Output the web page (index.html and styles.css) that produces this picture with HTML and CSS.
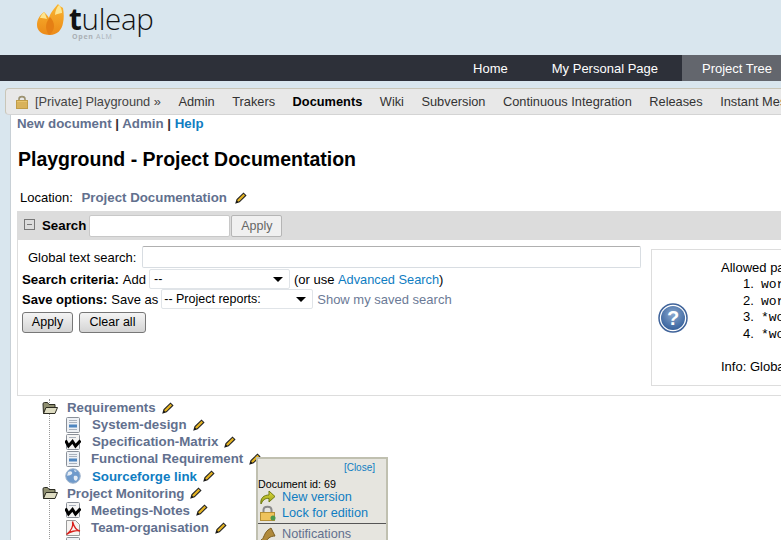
FILE: index.html
```html
<!DOCTYPE html>
<html lang="en">
<head>
    <meta charset="UTF-8">
    <title>Playground - Project Documentation</title>
    <link rel="stylesheet" href="styles.css">
</head>
<body>
    <svg class="sprites" width="0" height="0">
        <defs>
            <linearGradient id="flameFill" x1="0" y1="0" x2="0" y2="1">
                <stop offset="0" stop-color="#f9b530"/>
                <stop offset="1" stop-color="#ec8a18"/>
            </linearGradient>
            <radialGradient id="helpFill" cx=".5" cy=".35" r=".7">
                <stop offset="0" stop-color="#8aa8cf"/>
                <stop offset="1" stop-color="#2f5b98"/>
            </radialGradient>
            <linearGradient id="arrowFill" x1="0" y1="0" x2="0" y2="1">
                <stop offset="0" stop-color="#e2dc3a"/>
                <stop offset="1" stop-color="#8f9a18"/>
            </linearGradient>
        </defs>
        <symbol id="pencil" viewBox="0 0 12 12">
            <path d="M1 11 L2 7.500 L8.500 1.200 L10.800 3.400 L4.400 9.800 Z" fill="#e6b422" stroke="#222" stroke-width="1.100"/>
            <path d="M1 11 L2 8.600 L3.400 10 Z" fill="#111"/>
        </symbol>
        <symbol id="folder" viewBox="0 0 16 14">
            <path d="M1 3 Q1 1.500 2.500 1.500 L5.500 1.500 L7 3.500 L13 3.500 L13 7 L4 7 L1.500 12.500 Z" fill="#8f8f70" stroke="#2c2c22"/>
            <path d="M1.500 12.500 L4 6.500 L15.500 6.500 L13 12.500 Z" fill="#dedcc2" stroke="#2c2c22" stroke-linejoin="round"/>
        </symbol>
        <symbol id="doc" viewBox="0 0 16 16">
            <rect x="1.500" y=".5" width="13" height="15" rx="1" fill="#eef1f5" stroke="#8a9099"/>
            <path d="M4 3.500 H12 M4 5.500 H12" stroke="#aab2bd"/>
            <rect x="4" y="7.500" width="8" height="3" fill="#4f86c0"/>
            <path d="M4 12.500 H12" stroke="#aab2bd"/>
        </symbol>
        <symbol id="word" viewBox="0 0 16 16">
            <rect x="1.500" y=".5" width="13" height="15" rx="1" fill="#f4f4f4" stroke="#8a9099"/>
            <path d="M4 3.500 H11" stroke="#aab2bd"/>
            <path d="M.5 6.500 L3.500 12 L7.500 7.500 L10.500 12 L15.500 6.500" fill="none" stroke="#000" stroke-width="3"/>
        </symbol>
        <symbol id="pdf" viewBox="0 0 16 16">
            <path d="M1.500 .5 H10.500 L14.500 4.500 V15.500 H1.500 Z" fill="#f6f4f2" stroke="#9a9a9a"/>
            <path d="M7.500 1.500 C8.500 6 6 11 1.500 14.500 C5 11.500 11 10 15 11 C11.500 10.500 9 7 7.500 1.500 Z" fill="none" stroke="#d8201c" stroke-width="1.300"/>
        </symbol>
        <symbol id="globe" viewBox="0 0 16 16">
            <circle cx="8" cy="8" r="7.300" fill="#6f9acb" stroke="#a4b7cd"/>
            <path d="M3 4 C6 2 8 4 7 6 C5 8 3 7 2 8 Z M9 8 C12 7 14 9 12 12 C10 14 8 11 9 8 Z M9 2 L12 3 L10 4 Z" fill="#e6edf5"/>
        </symbol>
    </svg>

    <header class="masthead">
        <svg class="flame" width="28" height="32" viewBox="0 0 28 32">
            <path d="M1 21 C1 16 3 12 8 8 C10 10 12 12 13 14 C14 9 18 5 22 0 C23 2 26 3 27 4 C28 10 28 14 27 19 C26 26 21 31 14 31 C6 31 1 27 1 21 Z" fill="url(#flameFill)"/>
            <path d="M13 31 C8 24 10 18 14 13 C19 18 20 26 13 31 Z" fill="#e57f14"/>
            <path d="M4 14 C5 11 7 9 8 8 C10 11 10 13 11 15 C8 14 6 14 4 14 Z" fill="#fde58f"/>
            <path d="M19 11 C19 7 21 3 23 1 C25 3 26 6 26 9 C24 9 21 10 19 11 Z" fill="#fde58f"/>
        </svg>
        <div class="brand">
            <div class="brand-name"><b>t</b>uleap</div>
            <div class="brand-sub"><b>Open</b> ALM</div>
        </div>
    </header>

    <nav class="topnav">
        <a href="#">Home</a>
        <a href="#">My Personal Page</a>
        <a href="#" class="active">Project Tree</a>
    </nav>

    <div class="servicebar">
        <svg class="lock" width="12" height="14" viewBox="0 0 12 14">
            <path d="M3 6 V4 C3 .8 9 .8 9 4 V6" fill="none" stroke="#9b9170" stroke-width="1.600"/>
            <rect x=".5" y="5.500" width="11" height="8" fill="#e8c46c" stroke="#c09c48"/>
            <path d="M1 8 H11 M1 10 H11 M1 12 H11" stroke="#c9a04a"/>
        </svg>
        <span class="project-name">[Private] Playground »</span>
        <a href="#">Admin</a>
        <a href="#">Trakers</a>
        <a href="#" class="current">Documents</a>
        <a href="#">Wiki</a>
        <a href="#">Subversion</a>
        <a href="#">Continuous Integration</a>
        <a href="#">Releases</a>
        <a href="#">Instant Messaging</a>
    </div>

    <main class="content">
        <p class="toolbar">
            <a href="#">New document</a> | <a href="#">Admin</a> | <a href="#" class="help">Help</a>
        </p>
        <h2>Playground - Project Documentation</h2>
        <p class="location">
            Location: <a href="#">Project Documentation</a>
            <svg class="pencil" width="12" height="12"><use href="#pencil"/></svg>
        </p>

        <section class="search">
            <div class="search-head">
                <span class="toggle"></span>
                <b>Search</b>
                <input type="text" class="quick-input">
                <button class="btn-light">Apply</button>
            </div>
            <div class="search-body">
                <div class="search-form">
                    <div class="row global">
                        <label>Global text search:</label>
                        <input type="text" class="global-input">
                    </div>
                    <div class="row">
                        <b>Search criteria:</b> Add
                        <span class="select select-add">--</span>
                        <span>(or use <a href="#" class="advanced">Advanced Search</a>)</span>
                    </div>
                    <div class="row">
                        <b class="save-label">Save options:</b> Save as
                        <span class="select select-save">-- Project reports:</span>
                        <a href="#" class="saved">Show my saved search</a>
                    </div>
                    <div class="row actions">
                        <button class="btn-apply">Apply</button>
                        <button class="btn-clear">Clear all</button>
                    </div>
                </div>
                <aside class="help-box">
                    <svg class="help-icon" width="30" height="30" viewBox="0 0 30 30">
                        <circle cx="15" cy="15" r="14" fill="#fff" stroke="#3f639a" stroke-width="1.500"/>
                        <circle cx="15" cy="15" r="12" fill="url(#helpFill)"/>
                        <text x="15" y="22" class="help-mark">?</text>
                    </svg>
                    <div class="help-text">
                        <div>Allowed patterns:</div>
                        <ol>
                            <li><code>word1 word2</code></li>
                            <li><code>word1 word2</code></li>
                            <li><code>*word1 word2</code></li>
                            <li><code>*word1 word2</code></li>
                        </ol>
                        <div>Info: Global text search</div>
                    </div>
                </aside>
            </div>
        </section>

        <ul class="tree">
            <li class="tree-folder"><svg width="16" height="14"><use href="#folder"/></svg><a href="#">Requirements</a><svg class="pencil" width="12" height="12"><use href="#pencil"/></svg></li>
            <li class="tree-doc"><svg width="16" height="16"><use href="#doc"/></svg><a href="#">System-design</a><svg class="pencil" width="12" height="12"><use href="#pencil"/></svg></li>
            <li class="tree-doc"><svg width="16" height="16"><use href="#word"/></svg><a href="#">Specification-Matrix</a><svg class="pencil" width="12" height="12"><use href="#pencil"/></svg></li>
            <li class="tree-doc tight"><svg width="16" height="16"><use href="#doc"/></svg><a href="#">Functional Requirement</a><svg class="pencil" width="12" height="12"><use href="#pencil"/></svg></li>
            <li class="tree-doc"><svg width="16" height="16"><use href="#globe"/></svg><a href="#" class="external">Sourceforge link</a><svg class="pencil" width="12" height="12"><use href="#pencil"/></svg></li>
            <li class="tree-folder"><svg width="16" height="14"><use href="#folder"/></svg><a href="#">Project Monitoring</a><svg class="pencil" width="12" height="12"><use href="#pencil"/></svg></li>
            <li class="tree-doc tight"><svg width="16" height="16"><use href="#word"/></svg><a href="#">Meetings-Notes</a><svg class="pencil" width="12" height="12"><use href="#pencil"/></svg></li>
            <li class="tree-doc tight"><svg width="16" height="16"><use href="#pdf"/></svg><a href="#">Team-organisation</a><svg class="pencil" width="12" height="12"><use href="#pencil"/></svg></li>
            <li class="tree-doc tight"><svg width="16" height="16"><use href="#doc"/></svg><a href="#">Status</a></li>
        </ul>

        <div class="popup">
            <a href="#" class="popup-close">[Close]</a>
            <div class="popup-id">Document id: 69</div>
            <a href="#" class="popup-item">
                <svg width="16" height="15" viewBox="0 0 16 15"><path d="M1 14 C0 8 4 5 9 5 V1 L15 6.500 L9 12 V8.500 C5 8 3 10 1 14 Z" fill="url(#arrowFill)" stroke="#6f7a12"/></svg>
                New version
            </a>
            <a href="#" class="popup-item">
                <svg width="16" height="16" viewBox="0 0 16 16"><path d="M3.500 8 V5 C3.500 .5 11.500 .5 11.500 5 V8" fill="none" stroke="#8a8a8a" stroke-width="2"/><rect x=".5" y="7.500" width="14" height="8" fill="#eec35c" stroke="#b58f35"/><circle cx="13" cy="13" r="2.500" fill="#4c9a4c"/></svg>
                Lock for edition
            </a>
            <hr>
            <a href="#" class="popup-item muted">
                <svg width="16" height="15" viewBox="0 0 16 15"><path d="M1 13 C4 12 4 6 8 3 L11 1 L15 9 C10 9 7 12 6 15 Z" fill="#b08a3c" stroke="#7b5d22"/></svg>
                Notifications
            </a>
        </div>
    </main>
</body>
</html>
```

FILE: styles.css
```css
html, body {
    height: 100%;
    overflow: hidden;
}
body {
    margin: 0;
    background-color: #d9e6ee;
    font-family: "Liberation Sans", Arial, sans-serif;
    font-size: 13px;
    color: #000;
}
a {
    text-decoration: none;
}
svg {
    flex: none;
}
.sprites {
    position: absolute;
}
.masthead {
    display: flex;
    height: 55px;
    padding: 4px 0 0 36px;
    box-sizing: border-box;
    gap: 5px;
}
.brand-name {
    font-family: "Open Sans", sans-serif;
    font-weight: 300;
    font-size: 29.500px;
    line-height: 30px;
    letter-spacing: -.3px;
    color: #111;
}
.brand-name b {
    font-weight: 700;
}
.brand-sub {
    margin-left: 3px;
    font-family: "Open Sans", sans-serif;
    font-size: 7px;
    line-height: 6px;
    letter-spacing: .7px;
    color: #aab0b5;
}
.topnav {
    display: flex;
    justify-content: flex-end;
    height: 26px;
    gap: 4px;
    background-color: #2d3039;
}
.topnav a {
    padding: 0 20px;
    line-height: 27px;
    color: #fff;
}
.topnav .active {
    flex: none;
    width: 99px;
    padding-right: 0;
    box-sizing: border-box;
    background-color: #63666d;
    white-space: nowrap;
}
.servicebar {
    display: flex;
    align-items: center;
    height: 25px;
    margin: 7px 0 0 5px;
    padding-left: 10px;
    border: 1px solid #c9c6b8;
    border-bottom-color: #d4d4d4;
    border-right: 0;
    border-radius: 4px 0 0 4px;
    background-color: #e8e8e8;
    font-size: 12.800px;
    white-space: nowrap;
    overflow: hidden;
}
.servicebar a {
    margin-left: 17.500px;
    color: #333;
}
.servicebar .current {
    font-weight: bold;
    color: #000;
}
.project-name {
    margin-left: 7px;
    color: #444;
}
.content {
    position: relative;
    margin-left: 10px;
    height: 425px;
    padding-left: 6px;
    border-left: 1px solid #c8d0d6;
    background-color: #fff;
    overflow: hidden;
}
.toolbar {
    margin: 1px 0 0;
    line-height: 16px;
    font-weight: bold;
    font-size: 13.300px;
    color: #333;
}
.toolbar a, .tree a, .location a {
    color: #62708e;
    font-weight: bold;
    font-size: 13.300px;
}
.toolbar .help, .tree .external {
    color: #0f7dc2;
}
h2 {
    margin: 15px 0 0 1px;
    font-size: 19.500px;
    line-height: 24px;
}
.location {
    margin: 19px 0 0 3px;
    line-height: 16px;
}
.location a {
    margin-left: 5px;
}
.pencil {
    vertical-align: -2px;
    margin-left: 4px;
}
.search {
    margin-top: 5px;
    border-left: 1px solid #ddd;
    border-bottom: 1px solid #ddd;
}
.search-head {
    display: flex;
    align-items: center;
    height: 29px;
    margin-left: -1px;
    padding-left: 7px;
    background-color: #dcdcdc;
    font-size: 13.300px;
}
.toggle {
    width: 9px;
    height: 9px;
    margin: -3px 7px 0 0;
    border: 1px solid #777;
    background: linear-gradient(#777, #777) center / 5px 1px no-repeat;
}
.quick-input {
    width: 139px;
    height: 20px;
    margin-left: 3px;
    padding: 0;
    border: 1px solid #c8c8c8;
    border-radius: 2px;
}
.btn-light {
    height: 22px;
    width: 51px;
    margin-left: 1px;
    padding: 0;
    border: 1px solid #b5b5b5;
    border-radius: 2px;
    background-color: #f0f0f0;
    color: #666;
    font: 12.500px "Liberation Sans", Arial, sans-serif;
}
.search-body {
    display: flex;
    height: 155px;
}
.search-form {
    flex: none;
    width: 631px;
    padding: 5px 0 0 4px;
    box-sizing: border-box;
}
.row {
    display: flex;
    align-items: center;
    gap: 4px;
    height: 20px;
    white-space: nowrap;
}
.row b {
    font-size: 13.300px;
}
.row .save-label {
    font-size: 13px;
}
.row a {
    color: #0f7dc2;
}
.row .advanced {
    font-size: 12.800px;
}
.global {
    height: 24px;
    padding-left: 6px;
    gap: 6px;
}
.global-input {
    width: 497px;
    height: 20px;
    padding: 0;
    border: 1px solid #d8dde2;
    border-top-color: #b0b0b0;
    border-radius: 2px;
}
.select {
    position: relative;
    box-sizing: border-box;
    height: 20px;
    line-height: 18px;
    padding-left: 4px;
    border: 1px solid #e0e4e8;
    border-radius: 2px;
    font-size: 12.500px;
}
.select::after {
    content: "";
    position: absolute;
    right: 6px;
    top: 7px;
    border: 5px solid transparent;
    border-top-color: #000;
    border-bottom-width: 0;
}
.select-add {
    width: 141px;
    margin-left: -1px;
}
.select-save {
    width: 152px;
    margin-left: -1px;
    padding-left: 2px;
}
.row .saved {
    color: #6b7a96;
}
.actions {
    height: 26px;
    gap: 6px;
}
.actions button {
    height: 21px;
    padding: 0;
    border: 1px solid #777;
    border-radius: 3px;
    background: linear-gradient(#f4f4f4, #d4d4d4);
    font: 12.500px "Liberation Sans", Arial, sans-serif;
}
.btn-apply {
    width: 51px;
}
.btn-clear {
    width: 67px;
}
.help-box {
    display: flex;
    align-items: center;
    flex: none;
    width: 300px;
    height: 137px;
    margin: 9px 0 0 2px;
    padding-left: 6px;
    border: 1px solid #ddd;
    box-sizing: border-box;
    white-space: nowrap;
}
.help-mark {
    fill: #fff;
    font: bold 20px "Liberation Sans", Arial, sans-serif;
    text-anchor: middle;
}
.help-text {
    align-self: flex-start;
    margin: 10px 0 0 33px;
}
.help-text ol {
    margin: 1px 0 17px;
    padding-left: 40px;
}
.help-text li {
    height: 16.600px;
    line-height: 16.600px;
}
.help-text li::marker {
    content: counter(list-item) ".\00a0\00a0";
}
code {
    font-family: "Liberation Mono", monospace;
    font-size: 13px;
    line-height: 1;
}
.tree {
    margin: 3px 0 0 32px;
    padding: 0;
    list-style: none;
    border-left: 1px dotted #999;
}
.tree li {
    display: flex;
    align-items: center;
    height: 17.150px;
    white-space: nowrap;
}
.tree svg {
    margin-left: -8px;
}
.tree a {
    margin-left: 9px;
}
.tree .pencil {
    margin-left: 6px;
}
.tree-doc {
    padding-left: 23px;
}
.tree-doc a {
    margin-left: 11px;
}
.tree-doc.tight a {
    margin-left: 10px;
}
.popup {
    position: absolute;
    left: 245px;
    top: 342px;
    width: 128px;
    height: 90px;
    border: 2px solid #c0c0b0;
    background-color: #e6e5df;
}
.popup-close {
    display: block;
    padding: 3px 11px 0 0;
    text-align: right;
    font-size: 10px;
    color: #0f7dc2;
}
.popup-id {
    margin: 5px 0 -1px;
    font-size: 10.700px;
}
.popup-item {
    display: flex;
    align-items: center;
    gap: 6px;
    height: 16px;
    padding-left: 2px;
    font-size: 12.700px;
    color: #0f7dc2;
}
.popup .muted {
    color: #62708e;
}
.popup hr {
    margin: 2px 0;
    border: 0;
    border-top: 1px solid #555;
}
```
